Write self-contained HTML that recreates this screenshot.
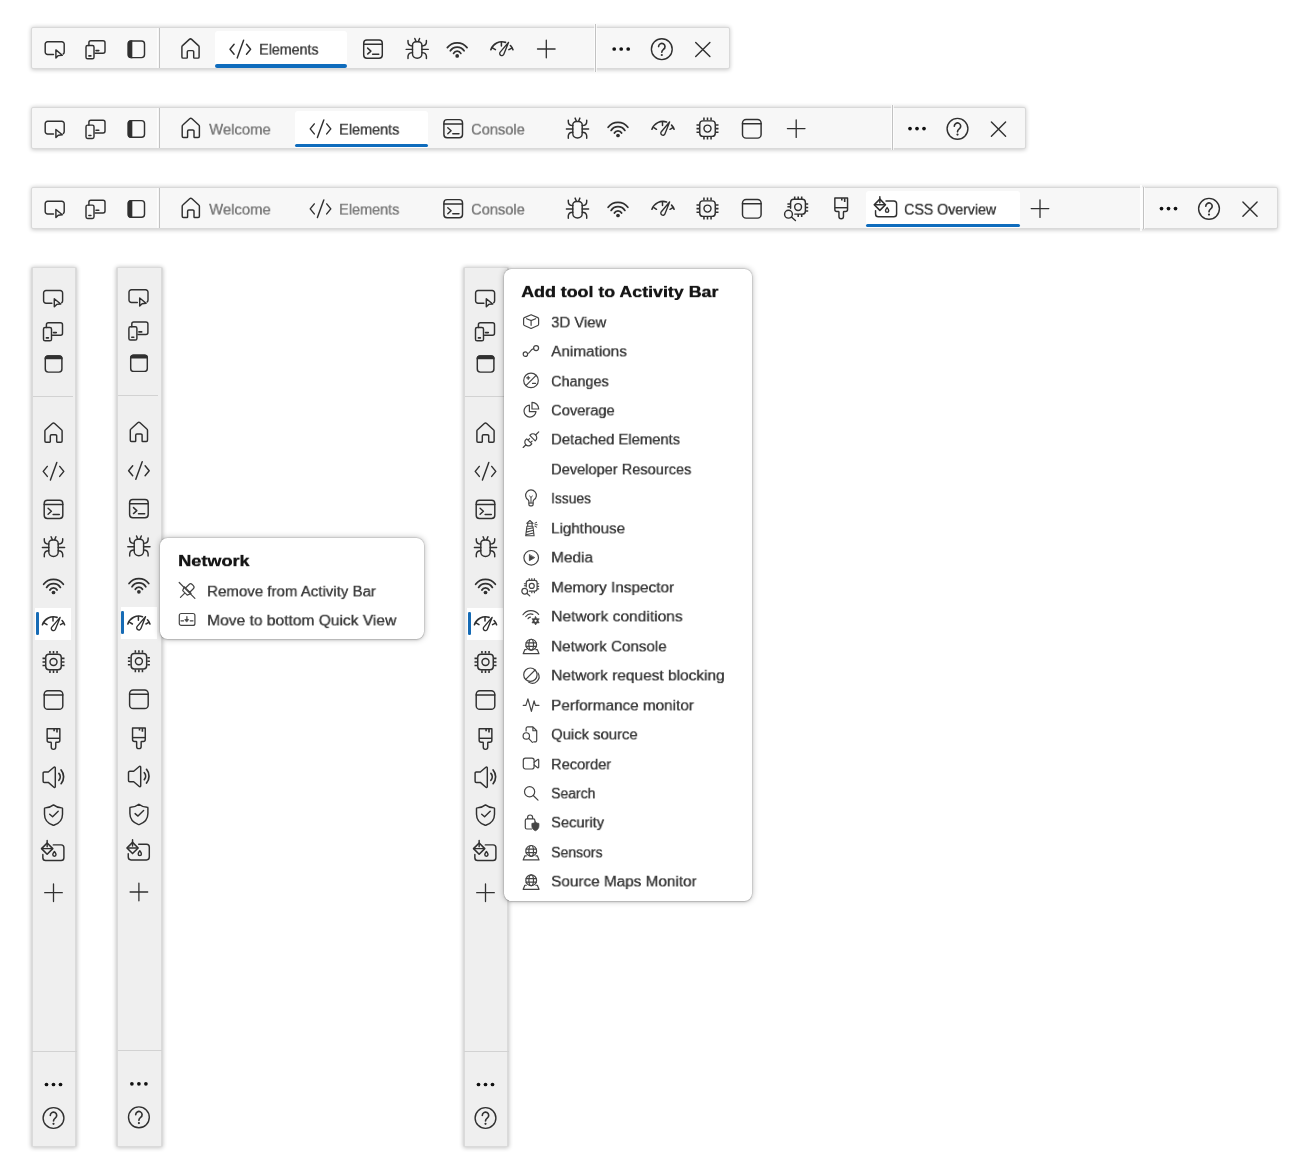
<!DOCTYPE html>
<html><head><meta charset="utf-8"><title>Activity Bar</title>
<style>
html,body{margin:0;padding:0;background:#fff;}
body{width:1300px;height:1172px;position:relative;overflow:hidden;font-family:"Liberation Sans",sans-serif;}
.tb{position:absolute;box-sizing:border-box;border-radius:2px;background:#f7f7f7;border:solid #d9d9d9;border-width:1.2px 1.6px 1.4px 1.6px;box-shadow:0 .5px 4.5px rgba(0,0,0,.22);}
.vb{position:absolute;box-sizing:border-box;border-radius:2px;background:#efefef;border:solid #dadada;border-width:1.2px 2.2px 1.5px 2.2px;box-shadow:0 .5px 4.5px rgba(0,0,0,.24);}
.vsep{position:absolute;width:1px;background:#c2c2c2;box-shadow:-1px 0 0 rgba(255,255,255,.7),1px 0 0 rgba(255,255,255,.7);}
.vl{box-shadow:-2px 0 0 rgba(255,255,255,.75) !important;}
.hsep{position:absolute;height:1px;background:#d2d2d2;}
.atab{position:absolute;background:#fff;border-radius:3px 3px 0 0;}
.atab i{position:absolute;left:0;right:0;bottom:.2px;height:3.8px;border-radius:2px;background:#0f6cbd;}
.vact{position:absolute;width:36.3px;height:32.3px;background:#fff;}
.vact i{position:absolute;left:.8px;top:4.1px;width:2.7px;height:23px;border-radius:1.3px;background:#166bb5;}
.t{position:absolute;white-space:nowrap;font-size:15px;line-height:20px;transform-origin:0 0;will-change:transform;}
.act{color:#3b3b3b;text-shadow:.35px 0 0 #3b3b3b;}
.ina{color:#7a7a7a;text-shadow:.35px 0 0 #7a7a7a;}
svg.ic{position:absolute;left:0;top:0;width:1300px;height:1172px;color:#303030;fill:none;stroke:#303030;stroke-width:1.45;stroke-linecap:round;}
.pop{position:absolute;background:#fff;border-radius:7.500px;box-shadow:0 0 0 .5px rgba(0,0,0,.10),0 0 6px rgba(0,0,0,.30),0 .5px 2px rgba(0,0,0,.16);}
.h{font-weight:bold;font-size:16px;color:#161616;text-shadow:.35px 0 0 #161616;}
.m{font-size:15px;color:#3b3b3b;text-shadow:.35px 0 0 #3b3b3b;}
</style></head><body>
<div class="tb" style="left:31.2px;top:27px;width:698.8px;height:41.8px"></div>
<div class="vsep vl" style="left:158.8px;top:28px;height:40px"></div>
<div class="vsep" style="left:595px;top:24px;height:47.5px"></div>
<div class="atab" style="left:215px;top:31px;width:132px;height:37px"><i></i></div>
<div class="t act" style="left:259px;top:40.88px;font-size:16px;transform:scale(0.8905,0.905);">Elements</div>
<div class="tb" style="left:31.2px;top:106.8px;width:994.9px;height:41.8px"></div>
<div class="vsep vl" style="left:158.8px;top:108.0px;height:40px"></div>
<div class="vsep" style="left:891.5px;top:104.6px;height:45.8px"></div>
<div class="atab" style="left:295px;top:110.6px;width:132.5px;height:37px"><i></i></div>
<div class="t ina" style="left:209.2px;top:120.88px;font-size:16px;transform:scale(0.9278,0.905);">Welcome</div>
<div class="t act" style="left:338.8px;top:120.88px;font-size:16px;transform:scale(0.9025,0.905);">Elements</div>
<div class="t ina" style="left:471px;top:120.88px;font-size:16px;transform:scale(0.9131,0.905);">Console</div>
<div class="tb" style="left:31.2px;top:186.8px;width:1247.3px;height:41.8px"></div>
<div class="vsep vl" style="left:158.8px;top:188.0px;height:40px"></div>
<div class="vsep" style="left:1143px;top:187.0px;height:42px"></div>
<div style="position:absolute;left:1139.6px;top:185.1px;width:2px;height:46px;background:rgba(255,255,255,.85)"></div>
<div class="atab" style="left:865.5px;top:190.6px;width:154px;height:37px"><i></i></div>
<div class="t ina" style="left:209.2px;top:200.88px;font-size:16px;transform:scale(0.9278,0.905);">Welcome</div>
<div class="t ina" style="left:338.8px;top:200.88px;font-size:16px;transform:scale(0.9025,0.905);">Elements</div>
<div class="t ina" style="left:471px;top:200.88px;font-size:16px;transform:scale(0.9131,0.905);">Console</div>
<div class="t act" style="left:903.8px;top:200.88px;font-size:16px;transform:scale(0.8843,0.905);">CSS Overview</div>
<div class="vb" style="left:30.700000000000003px;top:267.0px;width:46.5px;height:880.2px"></div>
<div class="hsep" style="left:32.7px;top:395.7px;width:40px"></div>
<div class="hsep" style="left:32.2px;top:1051px;width:44.4px"></div>
<div class="vact" style="left:35.2px;top:607.8px"><i></i></div>
<div class="vb" style="left:116.1px;top:267.0px;width:46.5px;height:880.2px"></div>
<div class="hsep" style="left:118.1px;top:395.0px;width:40px"></div>
<div class="hsep" style="left:117.6px;top:1050.3px;width:44.4px"></div>
<div class="vact" style="left:120.6px;top:607.0999999999999px"><i></i></div>
<div class="vb" style="left:462.7px;top:267.0px;width:46.5px;height:880.2px"></div>
<div class="hsep" style="left:464.7px;top:395.7px;width:40px"></div>
<div class="hsep" style="left:464.2px;top:1051px;width:44.4px"></div>
<div class="vact" style="left:467.2px;top:607.8px"><i></i></div>
<div class="pop" style="left:160px;top:538px;width:264px;height:101px"></div>
<div class="t h" style="left:177.6px;top:552.01px;font-size:16px;transform:scale(1.1311,0.945);">Network</div>
<div class="t m" style="left:206.9px;top:582.64px;font-size:16px;transform:scale(0.9398,0.895);">Remove from Activity Bar</div>
<div class="t m" style="left:206.9px;top:611.74px;font-size:16px;transform:scale(0.9725,0.895);">Move to bottom Quick View</div>
<div class="pop" style="left:504px;top:269px;width:248.3px;height:632px"></div>
<div class="t h" style="left:521.4px;top:283.26px;font-size:16px;transform:scale(1.1129,0.945);">Add tool to Activity Bar</div>
<div class="t m" style="left:550.6px;top:313.64px;font-size:16px;transform:scale(0.9292,0.895);">3D View</div>
<div class="t m" style="left:550.6px;top:343.10px;font-size:16px;transform:scale(0.9563,0.895);">Animations</div>
<div class="t m" style="left:550.6px;top:372.56px;font-size:16px;transform:scale(0.8978,0.895);">Changes</div>
<div class="t m" style="left:550.6px;top:402.02px;font-size:16px;transform:scale(0.9153,0.895);">Coverage</div>
<div class="t m" style="left:550.6px;top:431.48px;font-size:16px;transform:scale(0.9231,0.895);">Detached Elements</div>
<div class="t m" style="left:550.6px;top:460.94px;font-size:16px;transform:scale(0.9112,0.895);">Developer Resources</div>
<div class="t m" style="left:550.6px;top:490.40px;font-size:16px;transform:scale(0.8605,0.895);">Issues</div>
<div class="t m" style="left:550.6px;top:519.86px;font-size:16px;transform:scale(0.9426,0.895);">Lighthouse</div>
<div class="t m" style="left:550.6px;top:549.32px;font-size:16px;transform:scale(0.9592,0.895);">Media</div>
<div class="t m" style="left:550.6px;top:578.78px;font-size:16px;transform:scale(0.9606,0.895);">Memory Inspector</div>
<div class="t m" style="left:550.6px;top:608.24px;font-size:16px;transform:scale(0.9728,0.895);">Network conditions</div>
<div class="t m" style="left:550.6px;top:637.70px;font-size:16px;transform:scale(0.9481,0.895);">Network Console</div>
<div class="t m" style="left:550.6px;top:667.16px;font-size:16px;transform:scale(0.9658,0.895);">Network request blocking</div>
<div class="t m" style="left:550.6px;top:696.62px;font-size:16px;transform:scale(0.9552,0.895);">Performance monitor</div>
<div class="t m" style="left:550.6px;top:726.08px;font-size:16px;transform:scale(0.9264,0.895);">Quick source</div>
<div class="t m" style="left:550.6px;top:755.54px;font-size:16px;transform:scale(0.9117,0.895);">Recorder</div>
<div class="t m" style="left:550.6px;top:785.00px;font-size:16px;transform:scale(0.8717,0.895);">Search</div>
<div class="t m" style="left:550.6px;top:814.46px;font-size:16px;transform:scale(0.9153,0.895);">Security</div>
<div class="t m" style="left:550.6px;top:843.92px;font-size:16px;transform:scale(0.8756,0.895);">Sensors</div>
<div class="t m" style="left:550.6px;top:873.38px;font-size:16px;transform:scale(0.9568,0.895);">Source Maps Monitor</div>
<svg class="ic" viewBox="0 0 1300 1172">
<defs>
<symbol id="i-inspect" viewBox="0 0 24 24" overflow="visible"><path d="M11.200 16.600H5.300a2.400 2.400 0 0 1-2.400-2.400V6.300a2.400 2.400 0 0 1 2.400-2.400h14.200a2.400 2.400 0 0 1 2.400 2.400v7.800a2.600 2.600 0 0 1-.9 2" /><path d="M13.600 12.100v8.100l2.400-2.400 4-.400z" stroke-linejoin="round"/></symbol>
<symbol id="i-device" viewBox="0 0 24 24" overflow="visible"><path d="M5.700 8V5.200a2 2 0 0 1 2-2h12.100a2 2 0 0 1 2 2v8.600a2 2 0 0 1-2 2h-7.900"/><rect x="2.800" y="8" width="8" height="13.300" rx="1.600"/><path d="M12.800 13.100h2.800M5.700 18.400h2" stroke-width="1.600"/></symbol>
<symbol id="i-dockleft" viewBox="0 0 24 24" overflow="visible"><rect x="3.9" y="3.8" width="16.2" height="16.6" rx="3"/><path d="M7.2 3.8H6.9a3 3 0 0 0-3 3v10.6a3 3 0 0 0 3 3h.3z" fill="currentColor"/></symbol>
<symbol id="i-docktop" viewBox="0 0 24 24" overflow="visible"><rect x="3.8" y="3.9" width="16.6" height="16.2" rx="3"/><path d="M3.800 6.600a2.700 2.700 0 0 1 2.700-2.700h11.200a2.700 2.700 0 0 1 2.700 2.700z" fill="currentColor"/></symbol>
<symbol id="i-home" viewBox="0 0 24 24" overflow="visible"><path d="M3.4 10.4a1.8 1.8 0 0 1 .65-1.4l6.8-6.2a1.7 1.7 0 0 1 2.3 0l6.8 6.2a1.8 1.8 0 0 1 .65 1.4V20.300a1.2 1.2 0 0 1-1.2 1.2h-3.6a.6.6 0 0 1-.6-.6V15.2a1.2 1.2 0 0 0-1.2-1.2h-4a1.2 1.2 0 0 0-1.2 1.2v5.700a.6.6 0 0 1-.6.6H4.6A1.2 1.2 0 0 1 3.4 20.300z" stroke-linejoin="round"/></symbol>
<symbol id="i-code" viewBox="0 0 24 24" overflow="visible"><path d="M5.800 7.300L1.700 12.300l4.100 5M18.200 7.300l4.100 5-4.100 5M15.300 3.300L8.900 20.900" stroke-linejoin="round"/></symbol>
<symbol id="i-console" viewBox="0 0 24 24" overflow="visible"><rect x="2.7" y="3" width="18.6" height="18.200" rx="3.200"/><path d="M2.7 7.3h18.6M6.600 11.100l3.300 3-3.300 3M11.600 17.200h6.200" stroke-linejoin="round"/></symbol>
<symbol id="i-bug" viewBox="0 0 24 24" overflow="visible"><path d="M7.300 8.700a3.500 3.500 0 0 1 3.500-3.500h2.400a3.500 3.500 0 0 1 3.500 3.500v8.500c0 2.600-2 4.500-4.700 4.500s-4.700-1.900-4.700-4.500z"/><path d="M9.600 1.900l1.300 3.100M14.400 1.900l-1.300 3.100"/><path d="M2.800 3.900v1.600c0 2.600 1.600 3.800 4.500 3.800M21.200 3.900v1.600c0 2.600-1.600 3.800-4.500 3.800M.900 12.750h6.400M16.700 12.750h6.400M7.300 16c-2.900 0-4.300 1.400-4.500 3.600v2.400M16.700 16c2.900 0 4.300 1.400 4.500 3.600v2.400"/></symbol>
<symbol id="i-wifi" viewBox="0 0 24 24" overflow="visible"><path d="M2.15 10.10A12.5 12.5 0 0 1 21.85 10.10M5.12 13.33A8.2 8.2 0 0 1 18.88 13.33M8.38 15.88A4.1 4.1 0 0 1 15.62 15.88" stroke-width="1.750"/><circle cx="12" cy="18.400" r="1.850" fill="currentColor" stroke="none"/></symbol>
<symbol id="i-perf" viewBox="0 0 24 24" overflow="visible"><path d="M0.94 13.19A11.7 11.7 0 0 1 15.62 5.87M20.56 9.02A11.7 11.7 0 0 1 23.06 13.19" stroke-width="1.600"/><path d="M2.900 11.600l2.600 1.600M11.500 5.600v3.800M21.900 11.600l-2.900 1.600" stroke-width="1.500"/><path d="M18.600 5.900L10.300 15.600a2.150 2.150 0 1 0 3.700 2z" stroke-linejoin="round" stroke-width="1.350"/></symbol>
<symbol id="i-chip" viewBox="0 0 24 24" overflow="visible"><rect x="4.250" y="4.250" width="15.500" height="15.500" rx="3.200"/><circle cx="12" cy="12" r="3.500"/><path stroke-linecap="butt" stroke-width="1.550" d="M8.450 1v2.600M12 1v2.600M15.550 1v2.600M8.450 20.400v2.600M12 20.400v2.600M15.550 20.400v2.600M1 8.450h2.600M1 12h2.600M1 15.550h2.600M20.400 8.450h2.600M20.400 12h2.600M20.400 15.550h2.600"/></symbol>
<symbol id="i-window" viewBox="0 0 24 24" overflow="visible"><rect x="2.700" y="2.700" width="18.600" height="18.600" rx="3.600"/><path d="M2.700 7h18.600"/></symbol>
<symbol id="i-brush" viewBox="0 0 24 24" overflow="visible"><path d="M5.650 1.650h12.700v11.500a2 2 0 0 1-2 2h-1.500a.6.600 0 0 0-.6.600v4.350a2.250 2.250 0 0 1-4.500 0v-4.350a.6.600 0 0 0-.6-.600h-1.500a2 2 0 0 1-2-2z" stroke-linejoin="round"/><path d="M5.650 11.300h12.700" stroke-linecap="butt"/><path d="M12.600 1.900v2.300M15.500 1.900v3.600" stroke-width="1.600" stroke-linecap="butt"/></symbol>
<symbol id="i-sound" viewBox="0 0 24 24" overflow="visible"><path d="M12.400 2.200c.6-.5 1.400-.1 1.400.7v18.600c0 .8-.8 1.200-1.400.7l-5.600-4.800H2.800a1.200 1.200 0 0 1-1.200-1.200V8.200a1.200 1.200 0 0 1 1.200-1.200h4z" stroke-linejoin="round"/><path d="M17.400 8.400a5.200 5.200 0 0 1 0 6.900M19.600 5a10.600 10.600 0 0 1 0 13.700" stroke-width="1.700"/></symbol>
<symbol id="i-shield" viewBox="0 0 24 24" overflow="visible"><path d="M12 1.900c2.300 1.900 5 2.900 8.300 3 .4 0 .7.300.7.700v5.600c0 5.300-3 9.100-8.700 11.100a1 1 0 0 1-.6 0c-5.700-2-8.700-5.800-8.700-11.100V5.600c0-.4.300-.7.700-.7 3.300-.1 6-1.100 8.300-3z" stroke-linejoin="round"/><path d="M8.200 11.300l2.900 2.500 5.600-5.500" stroke-linejoin="round"/></symbol>
<symbol id="i-css" viewBox="0 0 24 24" overflow="visible"><path d="M12.100 5.300h7.800a2.800 2.800 0 0 1 2.800 2.800v10.100a2.800 2.800 0 0 1-2.800 2.800H4.450a2.800 2.800 0 0 1-2.800-2.800V14.900"/><path d="M5.950 3.450l5.600 5.600-5.600 5.600-5.600-5.600z" stroke-linejoin="round" stroke-width="1.600"/><path d="M5.950.900v6.200M1.200 9.050h9.500"/><path d="M13.200 11.900c1.200 1.500 1.600 2.400 1.600 3.100a1.600 1.600 0 0 1-3.200 0c0-.7.400-1.600 1.600-3.100z" stroke-linejoin="round"/></symbol>
<symbol id="i-plus" viewBox="0 0 24 24" overflow="visible"><path d="M12 3.200v17.600M3.200 12h17.600" stroke-width="1.300"/></symbol>
<symbol id="i-dots" viewBox="0 0 24 24" overflow="visible"><circle cx="5" cy="12" r="1.850" fill="#111" stroke="none"/><circle cx="12" cy="12" r="1.850" fill="#111" stroke="none"/><circle cx="19" cy="12" r="1.850" fill="#111" stroke="none"/></symbol>
<symbol id="i-help" viewBox="0 0 24 24" overflow="visible"><circle cx="12" cy="12" r="10.400" stroke-width="1.400"/><path d="M8.800 9.400a3.200 3.200 0 1 1 4.900 2.700c-1.100.8-1.700 1.400-1.700 2.900" stroke-width="1.650"/><circle cx="12" cy="17.800" r="1.100" fill="currentColor" stroke="none"/></symbol>
<symbol id="i-close" viewBox="0 0 24 24" overflow="visible"><path d="M4.900 4.900l14.200 14.200M19.100 4.900L4.900 19.100" stroke-width="1.400"/></symbol>
<symbol id="i-meminsp" viewBox="0 0 24 24" overflow="visible"><path d="M6.200 13.200V7.400a3.200 3.200 0 0 1 3.200-3.200h8.400a3.200 3.200 0 0 1 3.200 3.200v8.400a3.200 3.200 0 0 1-3.200 3.200H10.400"/><circle cx="13.700" cy="11.900" r="3.400"/><path stroke-linecap="butt" stroke-width="1.550" d="M10.300 1.500v2.700M13.800 1.500v2.700M17.300 1.500v2.700M21 8.900h2.800M21 12.400h2.800M21 15.900h2.800M3 8.900h3.200M3 11.600h3.200M13.800 19v2.800M17.300 19v2.800"/><circle cx="4.100" cy="19.100" r="3.900"/><path d="M7 21.900l4 3.500"/></symbol>
<symbol id="s-cube" viewBox="0 0 20 20" overflow="visible"><path d="M10 3l6.700 2.900a1.300 1.300 0 0 1 .8 1.200v5.500a1.300 1.300 0 0 1-.8 1.200L10 16.800l-6.700-3a1.300 1.300 0 0 1-.8-1.200V7.100a1.300 1.300 0 0 1 .8-1.200z" stroke-linejoin="round"/><path d="M5.500 7l4.500 1.900 4.500-1.900M10 8.900v4.700"/></symbol>
<symbol id="s-anim" viewBox="0 0 20 20" overflow="visible"><circle cx="4.300" cy="13" r="2.200"/><circle cx="15" cy="6.900" r="2.500"/><path d="M6.400 12.400c3.400-.2 2.200-4.400 6.200-4.900"/></symbol>
<symbol id="s-changes" viewBox="0 0 20 20" overflow="visible"><circle cx="9.900" cy="9.800" r="7.300"/><path d="M4.800 15L15 4.700M5.600 7.200h3M7.100 5.700v3M11.400 12.800h3"/></symbol>
<symbol id="s-coverage" viewBox="0 0 20 20" overflow="visible"><path d="M8.300 5a6 6 0 1 0 6.600 6.600H8.300z" stroke-linejoin="round"/><path d="M10.900 2.200a6.800 6.800 0 0 1 6.700 6.700h-6.700z" stroke-linejoin="round"/></symbol>
<symbol id="s-plug" viewBox="0 0 20 20" overflow="visible"><g transform="rotate(-45 10 10)"><path d="M-1.200 10H2.600M2.600 10a3.600 3.600 0 0 1 3.600-3.600H7.400v7.200H6.200A3.600 3.600 0 0 1 2.600 10zM7.400 8.200h2.200M7.400 11.800h2.200M12 6.200v7.600h.6a3.800 3.800 0 0 0 0-7.600zM16.400 10h4.400" stroke-linejoin="round"/></g></symbol>
<symbol id="s-bulb" viewBox="0 0 20 20" overflow="visible"><path d="M7 11.400a5.400 5.400 0 1 1 5.800 0c-.5.500-.8 1-.8 1.800v2.900a1.300 1.300 0 0 1-1.300 1.300H9.100a1.300 1.300 0 0 1-1.300-1.300v-2.900c0-.8-.3-1.300-.8-1.800z" stroke-linejoin="round"/><path d="M7.800 14.600h4.200M9.900 14.400V9M8.500 7.600l1.400 1.300 1.400-1.300" stroke-width="1"/></symbol>
<symbol id="s-lighthouse" viewBox="0 0 20 20" overflow="visible"><path d="M5.800 8.400h6l1.200 9.400H4.600zM6.600 8.400V5.400h4.400v3M5.600 5.400l3.200-2.800 3.200 2.800zM5.400 11.400l6.600-1.600M5.100 14.200l7.300-1.800M4.800 16.800l7.700-1.800" stroke-linejoin="round" stroke-width="1.100"/><path d="M13.800 5.200l1.800-.8M14 6.800h2M13.800 8.400l1.800.8" stroke-width="1"/></symbol>
<symbol id="s-media" viewBox="0 0 20 20" overflow="visible"><circle cx="10.100" cy="10.400" r="7.300"/><path d="M8.300 7.500v5.800l5-2.900z" fill="currentColor" stroke-linejoin="round" stroke-width=".8"/></symbol>
<symbol id="s-netcond" viewBox="0 0 20 20" overflow="visible"><path d="M1.87 8.44A9.8 9.8 0 0 1 17.52 8.17M4.68 10.20A6.5 6.5 0 0 1 11.81 8.02M6.92 12.40A3.4 3.4 0 0 1 9.33 10.83"/><path d="M14.50 10.30L15.75 12.33L18.14 12.40L17.00 14.50L18.14 16.60L15.75 16.67L14.50 18.70L13.25 16.67L10.86 16.60L12.00 14.50L10.86 12.40L13.25 12.33z" fill="currentColor" stroke-width=".6" stroke-linejoin="round"/><circle cx="14.500" cy="14.500" r="1.150" fill="#fff" stroke="none"/></symbol>
<symbol id="s-globe" viewBox="0 0 20 20" overflow="visible"><circle cx="10.100" cy="8.900" r="5.400"/><ellipse cx="10.100" cy="8.900" rx="2.300" ry="5.400"/><path d="M5 7.100h10.200M5 10.700h10.200"/><path d="M5.200 13.800H3.800L2.100 17.900h15.800l-1.700-4.100h-1.400" stroke-linejoin="round"/></symbol>
<symbol id="s-block" viewBox="0 0 20 20" overflow="visible"><circle cx="9.300" cy="9.500" r="6.700"/><path d="M4.600 14.200l9.400-9.400"/><path d="M16.900 7.800a6.700 6.700 0 0 1-9.400 9.100"/></symbol>
<symbol id="s-pulse" viewBox="0 0 20 20" overflow="visible"><path d="M2.100 10.650h2.700l2-6.500 3.500 12.500 2.700-10.400 1.300 4.400h3.600" stroke-linejoin="round"/></symbol>
<symbol id="s-qsource" viewBox="0 0 20 20" overflow="visible"><path d="M5 6.800V4.400a1.600 1.600 0 0 1 1.600-1.600h5.200l3.800 3.800v9.600a1.600 1.600 0 0 1-1.600 1.600h-1.400M11.800 2.800v3.800h3.800" stroke-linejoin="round"/><circle cx="5.200" cy="11.800" r="3.200"/><path d="M7.500 14.200l3.800 4"/></symbol>
<symbol id="s-video" viewBox="0 0 20 20" overflow="visible"><rect x="2.200" y="4.600" width="10.800" height="10.800" rx="2.200"/><path d="M13 8.600l3.600-2.700a.6.600 0 0 1 1 .5v7.200a.6.600 0 0 1-1 .5L13 11.400" stroke-linejoin="round"/></symbol>
<symbol id="s-search" viewBox="0 0 20 20" overflow="visible"><circle cx="8.500" cy="8.700" r="5.100"/><path d="M12.200 12.400l4.700 4.600"/></symbol>
<symbol id="s-lock" viewBox="0 0 20 20" overflow="visible"><path d="M10.600 16.500H5.700a1.500 1.500 0 0 1-1.500-1.500V7.900a1.500 1.500 0 0 1 1.500-1.500h6.600a1.500 1.500 0 0 1 1.500 1.500v1.300M6.500 6.400V5a2.500 2.500 0 0 1 5 0v1.400"/><path d="M14.300 9.600c1 .8 2.100 1.200 3.500 1.300v2.600c0 2.300-1.300 3.800-3.500 4.700-2.200-.9-3.500-2.400-3.500-4.700v-2.600c1.400-.1 2.500-.5 3.500-1.300z" fill="currentColor" stroke-linejoin="round" stroke-width=".8"/></symbol>
<symbol id="s-unpin" viewBox="0 0 20 20" overflow="visible"><g transform="translate(10.600 9.400) rotate(45)"><path d="M-3 .2V-4.800a2.200 2.200 0 0 1 2.200-2.200h1.600a2.200 2.200 0 0 1 2.200 2.200v5M-4.800.2h9.600l-1.600 3.800h-6.400zM0 4v6.400" stroke-linejoin="round"/></g><path d="M2 1.900l15.700 15.900"/></symbol>
<symbol id="s-movebottom" viewBox="0 0 20 20" overflow="visible"><rect x="2.100" y="4.200" width="15.600" height="11.900" rx="2"/><path d="M3.800 11.500h2.600M13 11.500h2.800M9.700 7.300v3"/><path d="M8 10.200h3.400l-1.700 2.300z" fill="currentColor" stroke-linejoin="round" stroke-width=".8"/></symbol>
<symbol id="s-meminsp2" viewBox="0 0 24 24" overflow="visible"><g stroke-width="1.650"><path d="M6.200 13.200V7.400a3.200 3.200 0 0 1 3.200-3.200h8.400a3.200 3.200 0 0 1 3.200 3.200v8.400a3.200 3.200 0 0 1-3.200 3.200H10.400"/><circle cx="13.700" cy="11.900" r="3.400"/><path stroke-linecap="butt" stroke-width="1.550" d="M10.300 1.500v2.700M13.800 1.500v2.700M17.300 1.500v2.700M21 8.900h2.800M21 12.400h2.800M21 15.900h2.800M3 8.900h3.200M3 11.600h3.200M13.800 19v2.800M17.300 19v2.800"/><circle cx="4.100" cy="19.100" r="3.900"/><path d="M7 21.900l4 3.500"/></g></symbol>
</defs>
<use href="#i-inspect" x="42.30" y="37.80" width="24" height="24" />
<use href="#i-device" x="83.20" y="37.50" width="24" height="24" />
<use href="#i-dockleft" x="124.40" y="37.20" width="24" height="24" />
<use href="#i-home" x="178.50" y="36.60" width="24" height="24" />
<use href="#i-code" x="228.30" y="37.00" width="24" height="24" />
<use href="#i-console" x="361.00" y="37.00" width="24" height="24" />
<use href="#i-bug" x="405.20" y="36.60" width="24" height="24" />
<use href="#i-wifi" x="445.20" y="37.50" width="24" height="24" />
<use href="#i-perf" x="489.90" y="36.50" width="24" height="24" />
<use href="#i-plus" x="534.30" y="37.00" width="24" height="24" />
<use href="#i-dots" x="609.20" y="37.00" width="24" height="24" />
<use href="#i-help" x="649.80" y="37.20" width="24" height="24" />
<use href="#i-close" x="690.80" y="37.50" width="24" height="24" />
<use href="#i-inspect" x="42.30" y="117.40" width="24" height="24" />
<use href="#i-device" x="83.20" y="117.10" width="24" height="24" />
<use href="#i-dockleft" x="124.40" y="116.80" width="24" height="24" />
<use href="#i-home" x="178.80" y="116.00" width="24" height="24" />
<use href="#i-code" x="308.50" y="116.60" width="24" height="24" />
<use href="#i-console" x="441.20" y="116.60" width="24" height="24" />
<use href="#i-bug" x="565.50" y="116.20" width="24" height="24" />
<use href="#i-wifi" x="606.00" y="117.10" width="24" height="24" />
<use href="#i-perf" x="651.00" y="116.10" width="24" height="24" />
<use href="#i-chip" x="695.50" y="116.60" width="24" height="24" />
<use href="#i-window" x="739.80" y="116.80" width="24" height="24" />
<use href="#i-plus" x="784.20" y="116.60" width="24" height="24" />
<use href="#i-dots" x="905.00" y="116.60" width="24" height="24" />
<use href="#i-help" x="945.50" y="116.80" width="24" height="24" />
<use href="#i-close" x="986.50" y="117.10" width="24" height="24" />
<use href="#i-inspect" x="42.30" y="197.40" width="24" height="24" />
<use href="#i-device" x="83.20" y="197.10" width="24" height="24" />
<use href="#i-dockleft" x="124.40" y="196.80" width="24" height="24" />
<use href="#i-home" x="178.80" y="196.00" width="24" height="24" />
<use href="#i-code" x="308.50" y="196.60" width="24" height="24" />
<use href="#i-console" x="441.20" y="196.60" width="24" height="24" />
<use href="#i-bug" x="565.50" y="196.20" width="24" height="24" />
<use href="#i-wifi" x="606.00" y="197.10" width="24" height="24" />
<use href="#i-perf" x="651.00" y="196.10" width="24" height="24" />
<use href="#i-chip" x="695.50" y="196.60" width="24" height="24" />
<use href="#i-window" x="739.80" y="196.80" width="24" height="24" />
<use href="#i-meminsp" x="784.40" y="195.10" width="24" height="24" />
<use href="#i-brush" x="829.20" y="196.40" width="24" height="24" />
<use href="#i-css" x="873.90" y="195.70" width="24" height="24" />
<use href="#i-plus" x="1028.00" y="196.60" width="24" height="24" />
<use href="#i-dots" x="1156.50" y="196.60" width="24" height="24" />
<use href="#i-help" x="1197.00" y="196.80" width="24" height="24" />
<use href="#i-close" x="1238.00" y="197.10" width="24" height="24" />
<use href="#i-inspect" x="40.70" y="286.60" width="24" height="24" />
<use href="#i-device" x="40.70" y="319.50" width="24" height="24" />
<use href="#i-docktop" x="41.50" y="352.00" width="24" height="24" />
<use href="#i-home" x="41.50" y="420.70" width="24" height="24" />
<use href="#i-code" x="41.50" y="459.10" width="24" height="24" />
<use href="#i-console" x="41.50" y="497.20" width="24" height="24" />
<use href="#i-bug" x="41.50" y="534.80" width="24" height="24" />
<use href="#i-wifi" x="41.50" y="574.10" width="24" height="24" />
<use href="#i-perf" x="41.50" y="611.50" width="24" height="24" />
<use href="#i-chip" x="41.50" y="649.90" width="24" height="24" />
<use href="#i-window" x="41.50" y="688.00" width="24" height="24" />
<use href="#i-brush" x="41.50" y="727.00" width="24" height="24" />
<use href="#i-sound" x="41.50" y="765.00" width="24" height="24" />
<use href="#i-shield" x="41.50" y="803.00" width="24" height="24" />
<use href="#i-css" x="41.20" y="839.60" width="24" height="24" />
<use href="#i-plus" x="41.50" y="880.70" width="24" height="24" />
<use href="#i-dots" x="41.50" y="1072.50" width="24" height="24" />
<use href="#i-help" x="41.50" y="1106.00" width="24" height="24" />
<use href="#i-inspect" x="126.10" y="285.90" width="24" height="24" />
<use href="#i-device" x="126.10" y="318.80" width="24" height="24" />
<use href="#i-docktop" x="126.90" y="351.30" width="24" height="24" />
<use href="#i-home" x="126.90" y="420.00" width="24" height="24" />
<use href="#i-code" x="126.90" y="458.40" width="24" height="24" />
<use href="#i-console" x="126.90" y="496.50" width="24" height="24" />
<use href="#i-bug" x="126.90" y="534.10" width="24" height="24" />
<use href="#i-wifi" x="126.90" y="573.40" width="24" height="24" />
<use href="#i-perf" x="126.90" y="610.80" width="24" height="24" />
<use href="#i-chip" x="126.90" y="649.20" width="24" height="24" />
<use href="#i-window" x="126.90" y="687.30" width="24" height="24" />
<use href="#i-brush" x="126.90" y="726.30" width="24" height="24" />
<use href="#i-sound" x="126.90" y="764.30" width="24" height="24" />
<use href="#i-shield" x="126.90" y="802.30" width="24" height="24" />
<use href="#i-css" x="126.60" y="838.90" width="24" height="24" />
<use href="#i-plus" x="126.90" y="880.00" width="24" height="24" />
<use href="#i-dots" x="126.90" y="1071.80" width="24" height="24" />
<use href="#i-help" x="126.90" y="1105.30" width="24" height="24" />
<use href="#i-inspect" x="472.70" y="286.60" width="24" height="24" />
<use href="#i-device" x="472.70" y="319.50" width="24" height="24" />
<use href="#i-docktop" x="473.50" y="352.00" width="24" height="24" />
<use href="#i-home" x="473.50" y="420.70" width="24" height="24" />
<use href="#i-code" x="473.50" y="459.10" width="24" height="24" />
<use href="#i-console" x="473.50" y="497.20" width="24" height="24" />
<use href="#i-bug" x="473.50" y="534.80" width="24" height="24" />
<use href="#i-wifi" x="473.50" y="574.10" width="24" height="24" />
<use href="#i-perf" x="473.50" y="611.50" width="24" height="24" />
<use href="#i-chip" x="473.50" y="649.90" width="24" height="24" />
<use href="#i-window" x="473.50" y="688.00" width="24" height="24" />
<use href="#i-brush" x="473.50" y="727.00" width="24" height="24" />
<use href="#i-sound" x="473.50" y="765.00" width="24" height="24" />
<use href="#i-shield" x="473.50" y="803.00" width="24" height="24" />
<use href="#i-css" x="473.20" y="839.60" width="24" height="24" />
<use href="#i-plus" x="473.50" y="880.70" width="24" height="24" />
<use href="#i-dots" x="473.50" y="1072.50" width="24" height="24" />
<use href="#i-help" x="473.50" y="1106.00" width="24" height="24" />
<g stroke-width="1.200" stroke="#444" color="#444"><use href="#s-cube" x="521.10" y="311.70" width="20" height="20"/>
<use href="#s-anim" x="521.10" y="341.16" width="20" height="20"/>
<use href="#s-changes" x="521.10" y="370.62" width="20" height="20"/>
<use href="#s-coverage" x="521.10" y="400.08" width="20" height="20"/>
<use href="#s-plug" x="521.10" y="429.54" width="20" height="20"/>
<use href="#s-bulb" x="521.10" y="488.46" width="20" height="20"/>
<use href="#s-lighthouse" x="521.10" y="517.92" width="20" height="20"/>
<use href="#s-media" x="521.10" y="547.38" width="20" height="20"/>
<use href="#s-meminsp2" x="521.70" y="577.24" width="17.6" height="17.6"/>
<use href="#s-netcond" x="521.10" y="606.30" width="20" height="20"/>
<use href="#s-globe" x="521.10" y="635.76" width="20" height="20"/>
<use href="#s-block" x="521.10" y="665.22" width="20" height="20"/>
<use href="#s-pulse" x="521.10" y="694.68" width="20" height="20"/>
<use href="#s-qsource" x="521.10" y="724.14" width="20" height="20"/>
<use href="#s-video" x="521.10" y="753.60" width="20" height="20"/>
<use href="#s-search" x="521.10" y="783.06" width="20" height="20"/>
<use href="#s-lock" x="521.10" y="812.52" width="20" height="20"/>
<use href="#s-globe" x="521.10" y="841.98" width="20" height="20"/>
<use href="#s-globe" x="521.10" y="871.44" width="20" height="20"/>
<use href="#s-unpin" x="177.20" y="580.60" width="20" height="20"/>
<use href="#s-movebottom" x="177.20" y="609.30" width="20" height="20"/></g>
</svg>
</body></html>
